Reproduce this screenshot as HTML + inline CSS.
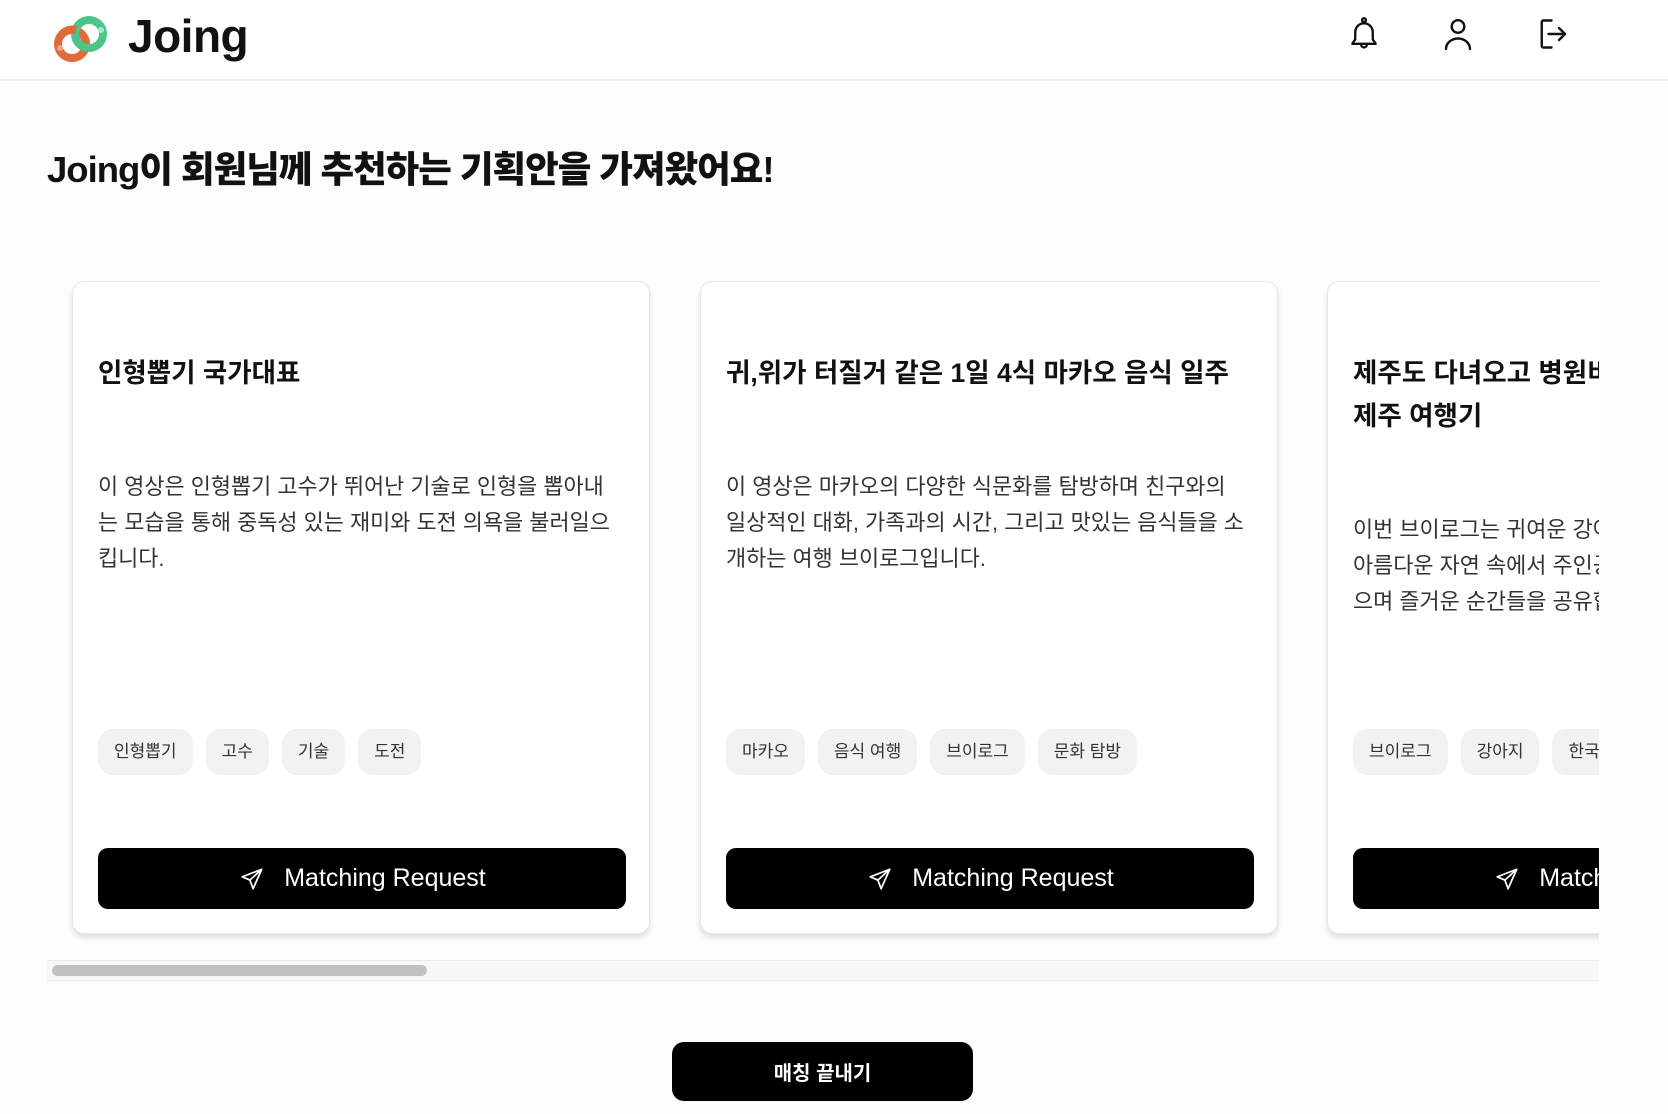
<!DOCTYPE html>
<html><head><meta charset="utf-8"><style>
*{margin:0;padding:0;box-sizing:border-box}
body{width:1668px;height:1114px;overflow:hidden;background:#fdfdfd;font-family:"Liberation Sans","Noto Sans CJK KR",sans-serif;color:#111;position:relative}
.hdr{position:absolute;left:0;top:0;width:1668px;height:81px;background:#fff;border-bottom:2px solid #f0f0f0}
.brand{position:absolute;left:128px;top:9px;font-size:46px;font-weight:700;letter-spacing:-0.5px;color:#111}
.ic{position:absolute;top:16px}
h1{position:absolute;left:47px;top:140px;font-size:36.5px;font-weight:800;letter-spacing:-1px}
.wrap{position:absolute;left:47px;top:270px;width:1552px;height:720px;overflow:hidden}
.card{position:absolute;top:11px;width:578px;height:653px;background:#fff;border:1px solid #e6e6e6;border-radius:12px;box-shadow:0 4px 6px rgba(0,0,0,0.12)}
.t{position:absolute;left:25px;top:70px;width:560px;font-size:26.5px;font-weight:700;line-height:43px;color:#111;white-space:nowrap}
.d{margin-top:74px;font-size:21.9px;line-height:36px;color:#333;font-weight:400;white-space:nowrap}
.tags{position:absolute;left:25px;top:447px;display:flex;gap:13px;white-space:nowrap}
.tag{height:46px;line-height:46px;padding:0 16px;background:#f2f2f2;border-radius:14px;font-size:17px;color:#333}
.btn{position:absolute;left:25px;top:566px;width:528px;height:61px;background:#000;border-radius:10px;color:#fff;font-size:25px;display:flex;align-items:center;justify-content:center;gap:18px}
.track{position:absolute;left:0;top:690px;width:1552px;height:21px;background:#f8f8f8;border-top:1px solid #ececec;border-bottom:1px solid #ececec}
.thumb{position:absolute;left:5px;top:4px;width:375px;height:11px;background:#c2c2c2;border-radius:6px}
.end{position:absolute;left:672px;top:1042px;width:301px;height:59px;background:#000;border-radius:12px;color:#fff;font-size:20px;font-weight:700;display:flex;align-items:center;justify-content:center}
</style></head><body>
<div class="hdr">
<svg style="position:absolute;left:52px;top:14px" width="58" height="50" viewBox="0 0 58 50">
<circle cx="20" cy="30" r="14" fill="none" stroke="#e06a3a" stroke-width="8"/>
<circle cx="37" cy="20" r="14" fill="none" stroke="#4cc48a" stroke-width="8"/>
<path d="M10 20 A14 14 0 0 1 24 16" fill="none" stroke="#e06a3a" stroke-width="8"/>
<circle cx="8" cy="34" r="3" fill="#f3a28a"/><circle cx="49" cy="16" r="3" fill="#a8ecc8"/>
</svg>
<div class="brand">Joing</div>
<svg class="ic" style="left:1346px" width="36" height="38" viewBox="0 0 24 26" fill="none" stroke="#111" stroke-width="1.6" stroke-linejoin="round"><path d="M6 11a6 6 0 0 1 12 0v5l2 3H4l2-3z"/><circle cx="12" cy="2.8" r="1.3"/><path d="M10 19.5a2 2 0 0 0 4 0"/></svg>
<svg class="ic" style="left:1440px" width="36" height="36" viewBox="0 0 24 24" fill="none" stroke="#111" stroke-width="1.6" stroke-linecap="round"><circle cx="12" cy="7" r="4.2"/><path d="M4 22a8 7 0 0 1 16 0"/></svg>
<svg class="ic" style="left:1535px" width="36" height="36" viewBox="0 0 24 24" fill="none" stroke="#111" stroke-width="1.6" stroke-linecap="round" stroke-linejoin="round"><path d="M11 3H5.5a1 1 0 0 0-1 1v16a1 1 0 0 0 1 1H11"/><path d="M9 12h11M16 8l4 4-4 4"/></svg>
</div>
<h1>Joing이 회원님께 추천하는 기획안을 가져왔어요!</h1>
<div class="wrap">
<div class="card" style="left:25px">
<div class="t">인형뽑기 국가대표<div class="d">이 영상은 인형뽑기 고수가 뛰어난 기술로 인형을 뽑아내<br>는 모습을 통해 중독성 있는 재미와 도전 의욕을 불러일으<br>킵니다.</div></div>
<div class="tags"><span class="tag">인형뽑기</span><span class="tag">고수</span><span class="tag">기술</span><span class="tag">도전</span></div>
<div class="btn"><svg width="28" height="26" viewBox="0 0 24 24" fill="none" stroke="#fff" stroke-width="1.6" stroke-linejoin="round"><path d="M21 3L3 10l7 3 3 8z"/><path d="M21 3L10 13"/></svg>Matching Request</div>
</div>
<div class="card" style="left:653px">
<div class="t">귀,위가 터질거 같은 1일 4식 마카오 음식 일주<div class="d">이 영상은 마카오의 다양한 식문화를 탐방하며 친구와의<br>일상적인 대화, 가족과의 시간, 그리고 맛있는 음식들을 소<br>개하는 여행 브이로그입니다.</div></div>
<div class="tags"><span class="tag">마카오</span><span class="tag">음식 여행</span><span class="tag">브이로그</span><span class="tag">문화 탐방</span></div>
<div class="btn"><svg width="28" height="26" viewBox="0 0 24 24" fill="none" stroke="#fff" stroke-width="1.6" stroke-linejoin="round"><path d="M21 3L3 10l7 3 3 8z"/><path d="M21 3L10 13"/></svg>Matching Request</div>
</div>
<div class="card" style="left:1280px">
<div class="t">제주도 다녀오고 병원비 폭탄<br>제주 여행기<div class="d">이번 브이로그는 귀여운 강아지와 함께<br>아름다운 자연 속에서 주인공이 산책하<br>으며 즐거운 순간들을 공유합니다.</div></div>
<div class="tags"><span class="tag">브이로그</span><span class="tag">강아지</span><span class="tag">한국 여행</span></div>
<div class="btn"><svg width="28" height="26" viewBox="0 0 24 24" fill="none" stroke="#fff" stroke-width="1.6" stroke-linejoin="round"><path d="M21 3L3 10l7 3 3 8z"/><path d="M21 3L10 13"/></svg>Matching Request</div>
</div>
<div class="track"><div class="thumb"></div></div>
</div>
<div class="end">매칭 끝내기</div>
</body></html>
